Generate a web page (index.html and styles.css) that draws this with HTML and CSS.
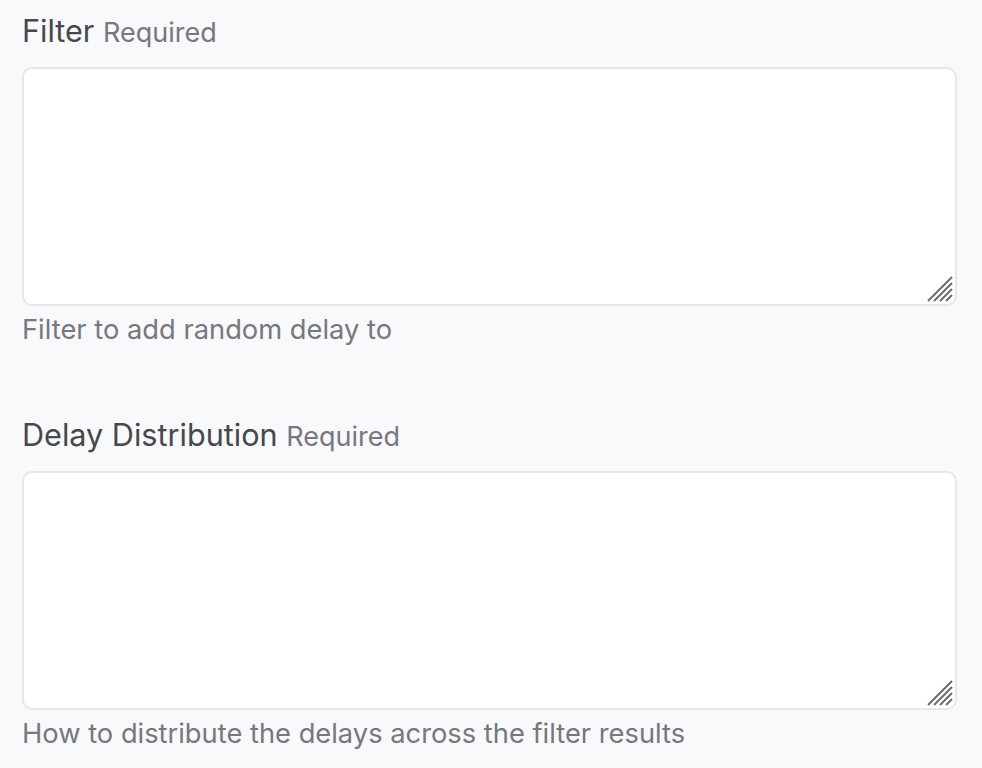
FILE: index.html
```html
<!DOCTYPE html>
<html lang="en">
<head>
<meta charset="utf-8">
<title>Form</title>
<link rel="stylesheet" href="styles.css">
</head>
<body>
<form class="form">
  <div class="field">
    <label class="label" for="filter">Filter <span class="req">Required</span></label>
    <div class="ta-wrap">
      <textarea id="filter" class="ta"></textarea>
      <svg class="grip" width="26" height="26" viewBox="0 0 26 26"><g stroke="#6b6b6b" stroke-width="2" stroke-linecap="butt"><line x1="1" y1="25" x2="25" y2="1"/><line x1="7" y1="25" x2="25" y2="7"/><line x1="13" y1="25" x2="25" y2="13"/><line x1="19" y1="25" x2="25" y2="19"/></g></svg>
    </div>
    <p class="help">Filter to add random delay to</p>
  </div>
  <div class="field">
    <label class="label" for="dist">Delay Distribution <span class="req">Required</span></label>
    <div class="ta-wrap">
      <textarea id="dist" class="ta"></textarea>
      <svg class="grip" width="26" height="26" viewBox="0 0 26 26"><g stroke="#6b6b6b" stroke-width="2" stroke-linecap="butt"><line x1="1" y1="25" x2="25" y2="1"/><line x1="7" y1="25" x2="25" y2="7"/><line x1="13" y1="25" x2="25" y2="13"/><line x1="19" y1="25" x2="25" y2="19"/></g></svg>
    </div>
    <p class="help">How to distribute the delays across the filter results</p>
  </div>
</form>
</body>
</html>
```
FILE: styles.css
```css
html, body {
  margin: 0;
  background: #f8f9fb;
}
body {
  font-family: Inter, "Noto Sans", sans-serif;
  padding: 11px 25px 0 22px;
}
.form {
  display: flex;
  flex-direction: column;
  gap: 67px;
}
.field {
  display: flex;
  flex-direction: column;
}
.label {
  font-size: 30.6px;
  color: #47474c;
  line-height: 40px;
  margin-bottom: 14px;
}
.req {
  font-size: 27px;
  color: #77777e;
}
.ta-wrap {
  position: relative;
}
.ta {
  display: block;
  box-sizing: border-box;
  width: 100%;
  height: 239px;
  border: 2px solid #e6e7ea;
  border-radius: 10px;
  background: #fff;
  resize: none;
  margin: 0;
}
.grip {
  position: absolute;
  right: 4px;
  bottom: 4px;
}
.help {
  margin: 6px 0 0;
  font-size: 27.3px;
  line-height: 36px;
  color: #77777e;
}
```
